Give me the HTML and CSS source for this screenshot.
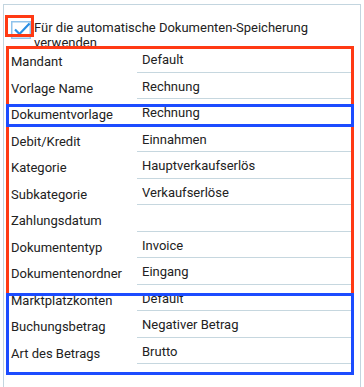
FILE: index.html
```html
<!DOCTYPE html>
<html lang="de">
  <head>
    <meta charset="UTF-8" />
    <meta name="viewport" content="width=device-width, initial-scale=1.0" />
    <title>Dokumenten-Speicherung</title>
    <link rel="stylesheet" href="styles.css">
  </head>
  <body>
    <div class="panel">
      <label class="auto">
        <span class="check">
          <svg width="20" height="18" viewBox="0 0 20 18">
            <rect x="0.75" y="0.75" width="18.5" height="16.5" fill="#fff" stroke="#8fc3ec" stroke-width="1.5" />
            <path d="M4 8.5 L8.5 13 L18.5 2.5" fill="none" stroke="#2a8fe3" stroke-width="2.2" />
          </svg>
        </span>
        <span class="auto-text">Für die automatische Dokumenten-Speicherung verwenden</span>
      </label>

      <div class="fields">
        <div class="row"><div class="key">Mandant</div><div class="val">Default</div></div>
        <div class="row"><div class="key">Vorlage Name</div><div class="val">Rechnung</div></div>
        <div class="row"><div class="key">Dokumentvorlage</div><div class="val">Rechnung</div></div>
        <div class="row"><div class="key">Debit/Kredit</div><div class="val">Einnahmen</div></div>
        <div class="row"><div class="key">Kategorie</div><div class="val">Hauptverkaufserlös</div></div>
        <div class="row"><div class="key">Subkategorie</div><div class="val">Verkaufserlöse</div></div>
        <div class="row"><div class="key">Zahlungsdatum</div><div class="val"></div></div>
        <div class="row"><div class="key">Dokumententyp</div><div class="val">Invoice</div></div>
        <div class="row"><div class="key">Dokumentenordner</div><div class="val">Eingang</div></div>
        <div class="row"><div class="key">Marktplatzkonten</div><div class="val">Default</div></div>
        <div class="row"><div class="key">Buchungsbetrag</div><div class="val">Negativer Betrag</div></div>
        <div class="row"><div class="key">Art des Betrags</div><div class="val">Brutto</div></div>
      </div>

      <!-- Markierungen -->
      <div class="mark red mark-check"></div>
      <div class="mark red mark-main"></div>
      <div class="mark blue mark-vorlage"></div>
      <div class="mark blue mark-bottom"></div>
    </div>
  </body>
</html>
```

FILE: styles.css
```css
* {
  margin: 0;
  padding: 0;
  box-sizing: border-box;
}
body {
  background: #fff;
  font-family: Roboto, "Liberation Sans", sans-serif;
  font-size: 13px;
  color: #222;
  overflow: hidden;
}
.panel {
  position: relative;
  margin: 4px 3px 0 3px;
  width: 358px;
  height: 400px;
  border: 1px solid #c3d5df;
  border-bottom: none;
}
.auto {
  display: flex;
  align-items: flex-start;
  padding: 10px 0 0 7px;
  height: 41px;
  line-height: 15px;
}
.check {
  width: 23px;
  flex: none;
  padding-top: 6px;
}
.check svg {
  display: block;
}
.auto-text {
  padding-top: 5px;
}
.fields {
  padding: 0 6px 0 7px;
}
.row {
  display: flex;
  height: 26.5px;
  line-height: 15px;
}
.key {
  width: 126px;
  flex: none;
  padding-top: 8px;
}
.val {
  flex: 1;
  padding: 6px 0 0 5px;
  border-bottom: 1px solid #c6d7df;
}
.mark {
  position: absolute;
  border: 3px solid;
}
.red {
  border-color: #ff3a14;
}
.blue {
  border-color: #1c4cff;
}
.mark-check {
  left: 1px;
  top: 10px;
  width: 29px;
  height: 22px;
}
.mark-main {
  left: 2px;
  top: 41px;
  width: 348px;
  height: 250px;
}
.mark-vorlage {
  left: 2px;
  top: 99px;
  width: 348px;
  height: 23px;
}
.mark-bottom {
  left: 2px;
  top: 288px;
  width: 348px;
  height: 82px;
}
```
